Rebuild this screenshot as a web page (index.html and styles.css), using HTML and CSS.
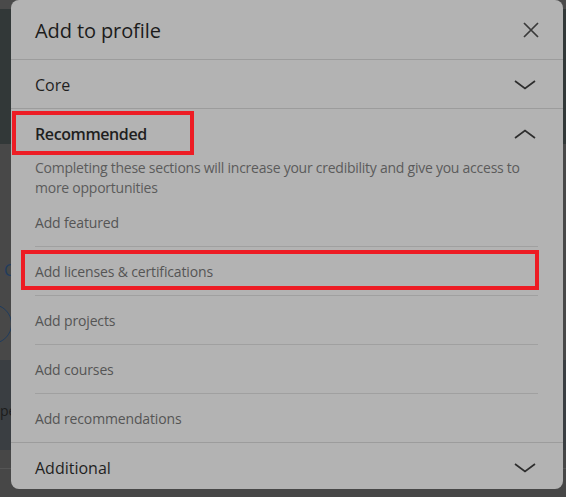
FILE: index.html
```html
<!DOCTYPE html>
<html lang="en">
<head>
  <meta charset="UTF-8" />
  <meta name="viewport" content="width=device-width, initial-scale=1" />
  <title>Add to profile</title>
  <link rel="stylesheet" href="styles.css">
</head>
<body>

  <!-- Page behind the dialog -->
  <div class="page">
    <div class="feed">
      <div class="topbar"></div>
      <div class="cover"></div>
      <div class="about">
        <span class="about-letter">C</span>
        <span class="avatar"></span>
      </div>
      <div class="promo"><span>pe</span></div>
      <div class="rest"></div>
    </div>
  </div>

  <!-- Add to profile dialog -->
  <div class="modal">
    <div class="modal-header">
      <h2>Add to profile</h2>
      <button class="close" aria-label="Close">
        <svg width="16" height="16" viewBox="0 0 16 16"><path d="M1 1 L15 15 M15 1 L1 15" stroke="currentColor" stroke-width="1.7" fill="none"/></svg>
      </button>
    </div>

    <div class="group">
      <div class="group-head">
        <span>Core</span>
        <svg class="chevron" width="24" height="24" viewBox="0 0 24 24"><path d="M2 8 L12 15.5 L22 8" stroke="currentColor" stroke-width="1.7" fill="none"/></svg>
      </div>
    </div>

    <div class="group">
      <div class="group-head open">
        <span>Recommended</span>
        <svg class="chevron" width="24" height="24" viewBox="0 0 24 24"><path d="M2 16 L12 8.5 L22 16" stroke="currentColor" stroke-width="1.7" fill="none"/></svg>
      </div>
      <p class="group-desc">Completing these sections will increase your credibility and give you access to more opportunities</p>
      <ul class="items">
        <li>Add featured</li>
        <li>Add licenses &amp; certifications</li>
        <li>Add projects</li>
        <li>Add courses</li>
        <li>Add recommendations</li>
      </ul>
    </div>

    <div class="group last">
      <div class="group-head">
        <span>Additional</span>
        <svg class="chevron" width="24" height="24" viewBox="0 0 24 24"><path d="M2 8 L12 15.5 L22 8" stroke="currentColor" stroke-width="1.7" fill="none"/></svg>
      </div>
    </div>

    <!-- annotation boxes -->
    <div class="mark mark-recommended"></div>
    <div class="mark mark-licenses"></div>
  </div>

</body>
</html>
```

FILE: styles.css
```css
body {
  margin: 0;
  padding: 0;
  background-color: #3b3b3b;
  font-family: "Open Sans", "Noto Sans", sans-serif;
  overflow: hidden;
}

/* page behind the overlay */
.page {
  height: 497px;
}

.feed {
  display: flex;
  flex-direction: column;
  height: 100%;
}

.topbar {
  height: 9px;
  background: #4a4a4a;
}

.cover {
  height: 135px;
  background: #323838;
}

.about {
  height: 216px;
  background: #484848;
  position: relative;
}

.about-letter {
  position: absolute;
  top: 115px;
  left: 4px;
  font-size: 16px;
  color: #1f3c5e;
}

.avatar {
  position: absolute;
  top: 160px;
  left: -28px;
  width: 38px;
  height: 38px;
  border: 1.5px solid #1f3c5e;
  border-radius: 50%;
}

.promo {
  height: 90px;
  background: #3a3e42;
  padding-top: 41px;
  box-sizing: border-box;
  font-size: 14px;
  color: #1c1c1c;
}

.rest {
  flex: 1;
  background: #474747;
  border-top: 18px solid #474747;
  box-shadow: inset 0 1px 0 #555;
}

/* dialog */
.modal {
  position: absolute;
  top: 0;
  left: 11px;
  width: 552px;
  height: 489px;
  background: #b3b3b3;
  border-radius: 8px;
  overflow: hidden;
}

.modal-header {
  height: 59px;
  display: flex;
  align-items: center;
  justify-content: space-between;
  padding: 1px 24px 0;
  box-sizing: border-box;
  height: 60px;
  border-bottom: 1px solid #9c9c9c;
}

.modal-header h2 {
  margin: 0;
  font-size: 20px;
  font-weight: 400;
  letter-spacing: -0.1px;
  color: #1c1c1c;
}

.close {
  background: none;
  border: none;
  padding: 0;
  color: #3a3a3a;
  display: flex;
}

.group {
  border-bottom: 1px solid #9c9c9c;
}

.group.last {
  border-bottom: none;
}

.group-head {
  height: 48px;
  display: flex;
  align-items: center;
  justify-content: space-between;
  padding: 1px 24px 0;
  box-sizing: border-box;
  font-size: 16px;
  color: #1f1f1f;
}

.group-head.open {
  font-weight: 600;
  letter-spacing: -0.4px;
}

.chevron {
  color: #2e2e2e;
  margin-right: 2px;
}

.group-desc {
  margin: 0;
  padding: 1px 24px 0;
  font-size: 14px;
  line-height: 20px;
  letter-spacing: -0.25px;
  color: #5b5b5b;
}

.items {
  list-style: none;
  margin: 0;
  padding: 0 25px 0 24px;
}

.items li {
  height: 48px;
  display: flex;
  align-items: center;
  padding-top: 1px;
  box-sizing: border-box;
  height: 49px;
  font-size: 14px;
  letter-spacing: -0.15px;
  color: #555;
  border-bottom: 1px solid #a0a0a0;
}

.items li:last-child {
  border-bottom: none;
  height: 48px;
}

/* red annotation boxes */
.mark {
  position: absolute;
  border: 4px solid #ed1c24;
  box-sizing: border-box;
}

.mark-recommended {
  left: 1px;
  top: 111px;
  width: 182px;
  height: 44px;
}

.mark-licenses {
  left: 10px;
  top: 250px;
  width: 518px;
  height: 40px;
}
```
